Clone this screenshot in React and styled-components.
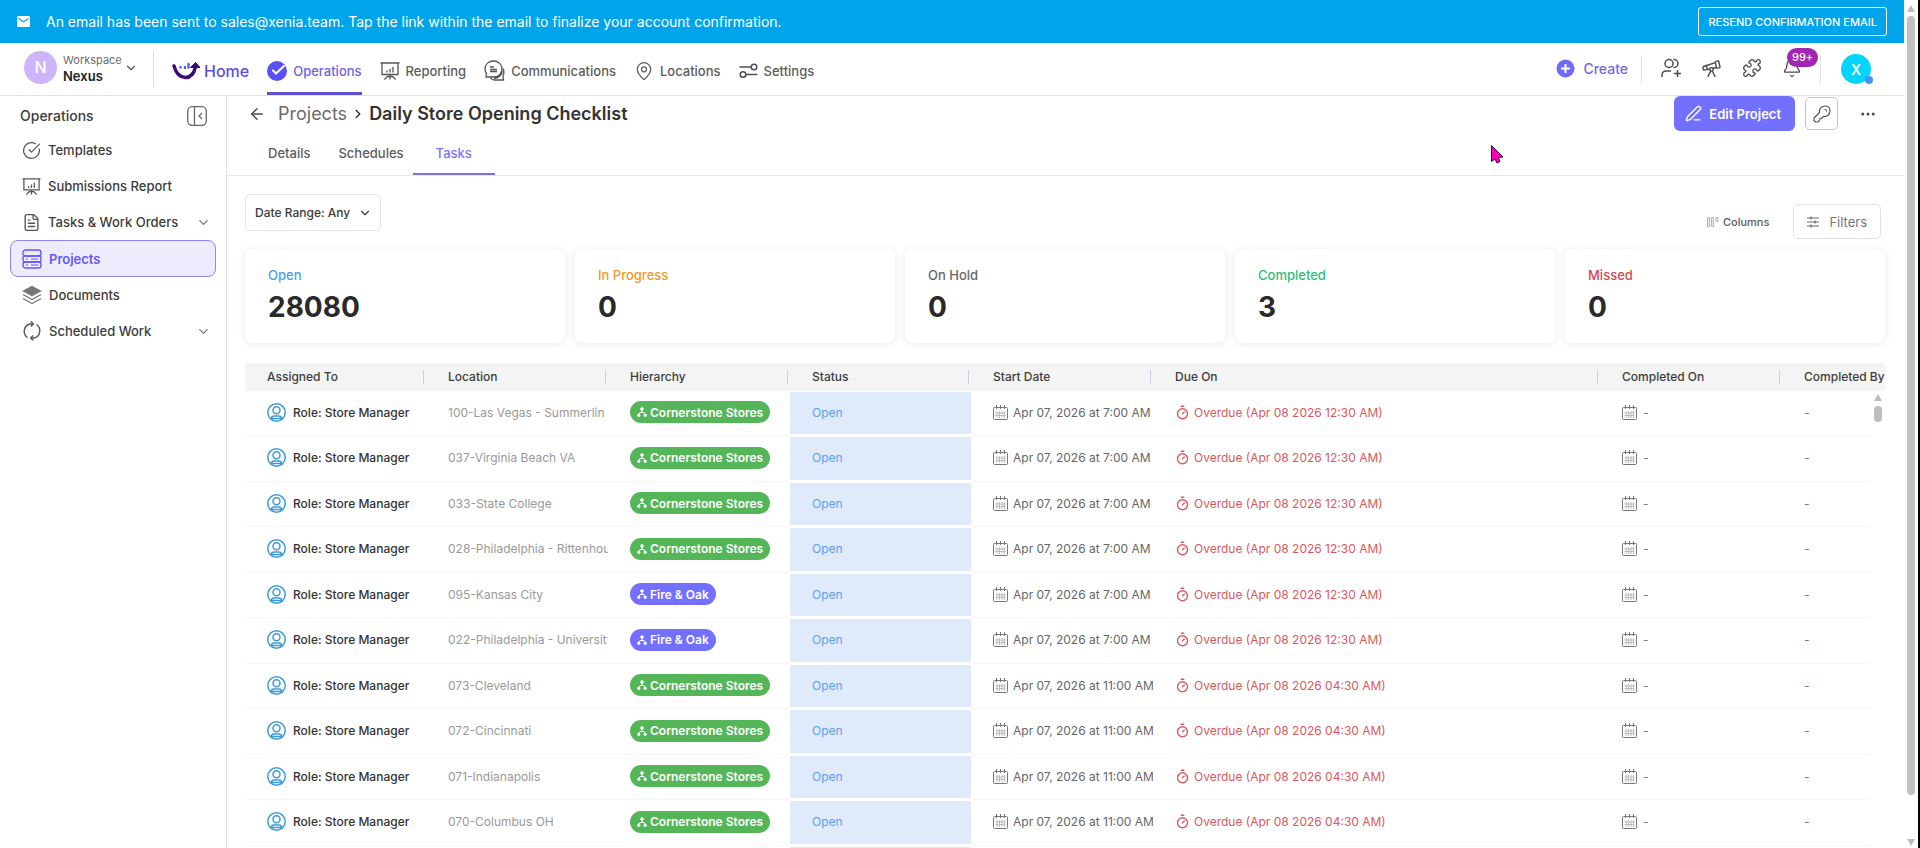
import styled, { createGlobalStyle } from "styled-components";
import {
  ArrowLeft,
  Bell,
  ChevronDown,
  ChevronRight,
  CircleCheckBig,
  Ellipsis,
  FileText,
  MapPin,
  PenLine,
  Puzzle,
  Telescope,
  Timer,
} from "lucide-react";

const GlobalStyle = createGlobalStyle`
  * {
    box-sizing: border-box;
  }
  body {
    margin: 0;
    overflow: hidden;
    background: #fff;
    color: #3c3c3c;
    font-family: Inter, "Open Sans", sans-serif;
    font-size: 13px;
  }
  button, select {
    font-family: inherit;
    color: inherit;
    cursor: pointer;
  }
  a {
    color: inherit;
    text-decoration: none;
  }
  svg {
    flex: none;
    display: block;
  }
`;

/* ---------- shell ---------- */

const Shell = styled.div`
  display: flex;
  height: 100vh;
  border-right: 2px solid #000;
`;
const Page = styled.div`
  flex: 1;
  min-width: 0;
  display: flex;
  flex-direction: column;
`;
const PageScrollbar = styled.div`
  width: 14px;
  display: flex;
  flex-direction: column;
  align-items: center;
  gap: 4px;
  padding: 5px 0 2px;
`;
const PageThumb = styled.div`
  flex: 1;
  width: 8px;
  margin-bottom: 40px;
  border-radius: 4px;
  background: #c1c1c1;
`;
const Body = styled.div`
  flex: 1;
  min-height: 0;
  display: flex;
`;

/* ---------- banner ---------- */

const Banner = styled.div`
  display: flex;
  align-items: center;
  gap: 16px;
  height: 43px;
  padding: 0 17px;
  background: #00a4ea;
  color: #fff;
`;
const BannerText = styled.p`
  flex: 1;
  margin: 0;
  font-size: 14px;
`;
const ResendButton = styled.button`
  height: 29px;
  padding: 0 9px;
  border: 1px solid #fff;
  border-radius: 3px;
  background: none;
  color: #fff;
  font-size: 11px;
  font-weight: 500;
`;

/* ---------- top bar ---------- */

const TopBar = styled.header`
  display: flex;
  align-items: center;
  height: 53px;
  padding: 0 33px 0 24px;
  border-bottom: 1px solid #e2e2e2;
`;
const WorkspaceButton = styled.button`
  display: flex;
  align-items: center;
  gap: 6px;
  width: 130px;
  height: 36px;
  padding: 0 18px 3px 0;
  border: none;
  border-right: 1px solid #e0e0e0;
  background: none;
  text-align: left;
`;
const WorkspaceAvatar = styled.span`
  flex: none;
  width: 33px;
  height: 33px;
  border-radius: 50%;
  background: #cdb4fb;
  color: #fff;
  font-size: 16px;
  font-weight: 500;
  line-height: 33px;
  text-align: center;
`;
const WorkspaceText = styled.span`
  flex: 1;
  display: flex;
  flex-direction: column;
  font-size: 11px;
  line-height: 16px;
  color: #6b6b6b;

  strong {
    color: #222;
    font-size: 13px;
    font-weight: 600;
  }
`;
const WorkspaceArrow = styled(ChevronDown)`
  margin-left: -4px;
`;
const Nav = styled.nav`
  flex: 1;
  align-self: stretch;
  display: flex;
  gap: 18px;
  padding-left: 18px;
`;
const NavLink = styled.a`
  display: flex;
  align-items: center;
  gap: 6px;
  padding-top: 6px;
  border-bottom: 3px solid ${(p) => (p.$active ? "#5e50c8" : "transparent")};
  color: ${(p) => (p.$active ? "#6f63e0" : "#5c5c5c")};
  font-weight: 500;
`;
const HomeLink = styled(NavLink)`
  gap: 4px;
  color: #5b4ddb;
  font-size: 16px;
`;
const CreateButton = styled.button`
  display: flex;
  align-items: center;
  gap: 8px;
  height: 28px;
  padding: 0 13px 2px 0;
  border: none;
  border-right: 1px solid #e0e0e0;
  background: none;
  color: #7468e8;
  font-size: 14px;
  font-weight: 500;
`;
const Tools = styled.div`
  display: flex;
  align-items: center;
  gap: 20px;
  height: 28px;
  padding: 0 18px 2px 19px;
  border-right: 1px solid #e0e0e0;
`;
const IconButton = styled.button`
  position: relative;
  display: flex;
  padding: 0;
  border: none;
  background: none;
  color: #4c4c4c;
`;
const Badge = styled.span`
  position: absolute;
  left: 5px;
  top: -10px;
  height: 19px;
  padding: 0 5px;
  border-radius: 10px;
  background: #a126b4;
  color: #fff;
  font-size: 11px;
  font-weight: 500;
  line-height: 19px;
`;
const UserAvatar = styled.button`
  position: relative;
  width: 30px;
  height: 30px;
  margin-left: 20px;
  padding: 0;
  border: none;
  border-radius: 50%;
  background: #00d5ff;
  color: #fff;
  font-size: 14px;
  font-weight: 600;
`;
const OnlineDot = styled.span`
  position: absolute;
  right: -2px;
  bottom: 0;
  width: 8px;
  height: 8px;
  border-radius: 50%;
  background: #4a90f0;
`;

/* ---------- sidebar ---------- */

const Sidebar = styled.aside`
  width: 227px;
  padding: 8px 10px;
  border-right: 1px solid #e2e2e2;
`;
const SidebarHead = styled.div`
  display: flex;
  align-items: center;
  justify-content: space-between;
  height: 28px;
  padding: 0 9px 4px 10px;
`;
const SidebarTitle = styled.h2`
  margin: 0;
  font-size: 14px;
  font-weight: 500;
  line-height: 28px;
`;
const SideLink = styled.a`
  display: flex;
  align-items: center;
  gap: 7px;
  height: ${(p) => (p.$active ? 37 : 36)}px;
  padding: 0 4px 0 11px;
  border: 1px solid ${(p) => (p.$active ? "#8d85f0" : "transparent")};
  border-radius: 8px;
  background: ${(p) => (p.$active ? "#eeebff" : "none")};
  color: ${(p) => (p.$active ? "#6558f5" : "#3c3c3c")};
  font-weight: ${(p) => (p.$active ? 600 : 500)};

  span {
    flex: 1;
  }
`;

/* ---------- project header ---------- */

const Main = styled.main`
  flex: 1;
  min-width: 0;
  display: flex;
  flex-direction: column;
`;
const TitleRow = styled.div`
  display: flex;
  align-items: center;
  height: 35px;
  padding: 0 27px 0 21px;
`;
const Crumbs = styled.div`
  flex: 1;
  display: flex;
  align-items: center;
  gap: 4px;
  color: #333;
  font-size: 18px;

  button {
    margin-right: 8px;
  }
  a {
    color: #6b6b6b;
  }
`;
const Title = styled.h1`
  margin: 0;
  font-size: 18px;
  font-weight: 600;
`;
const EditButton = styled.button`
  display: flex;
  align-items: center;
  gap: 7px;
  height: 35px;
  margin-right: 10px;
  padding: 0 14px 0 11px;
  border: none;
  border-radius: 6px;
  background: #7470ff;
  color: #fff;
  font-size: 13px;
  font-weight: 600;
`;
const KeyButton = styled.button`
  display: grid;
  place-items: center;
  width: 33px;
  height: 33px;
  margin-right: 21px;
  padding: 0;
  border: 1px solid #c4c4c4;
  border-radius: 5px;
  background: none;
`;
const Tabs = styled.div`
  display: flex;
  height: 45px;
  padding-left: 27px;
  border-bottom: 1px solid #e8e8e8;
`;
const Tab = styled.a`
  padding: 14px ${(p) => (p.$active ? 23 : 14)}px 0;
  margin-left: ${(p) => (p.$active ? -5 : 0)}px;
  border-bottom: 2px solid ${(p) => (p.$active ? "#7a72e0" : "transparent")};
  color: ${(p) => (p.$active ? "#7a74f5" : "#5c5c5c")};
  font-weight: 500;
`;

/* ---------- filters and totals ---------- */

const Content = styled.div`
  flex: 1;
  min-height: 0;
  display: flex;
  flex-direction: column;
  padding: 18px 19px 0 18px;
`;
const FilterRow = styled.div`
  display: flex;
  align-items: flex-start;
  justify-content: space-between;
`;
const RangeBox = styled.label`
  display: grid;
  align-items: center;
  width: 136px;
  height: 37px;
  border: 1px solid #e4e4e4;
  border-radius: 5px;

  select, svg {
    grid-area: 1 / 1;
  }
  select {
    height: 100%;
    padding: 0 9px;
    border: none;
    background: none;
    appearance: none;
    font-size: 12px;
    font-weight: 500;
  }
  svg {
    justify-self: end;
    margin-right: 8px;
    pointer-events: none;
  }
`;
const FilterActions = styled.div`
  display: flex;
  align-items: center;
  gap: 24px;
  padding: 10px 4px 0 0;
`;
const ColumnsButton = styled.button`
  display: flex;
  align-items: center;
  gap: 4px;
  padding: 0;
  border: none;
  background: none;
  color: #5a5a5a;
  font-size: 11px;
  font-weight: 500;
`;
const FiltersButton = styled.button`
  display: flex;
  align-items: center;
  gap: 10px;
  height: 35px;
  padding: 0 13px;
  border: 1px solid #e2e2e2;
  border-radius: 5px;
  background: none;
  color: #757575;
  font-size: 13px;
`;
const Cards = styled.section`
  display: grid;
  grid-template-columns: repeat(5, 1fr);
  gap: 10px;
  margin: 10px 0 20px;
`;
const Card = styled.div`
  height: 94px;
  padding: 17px 23px 0;
  border-radius: 8px;
  background: #fff;
  box-shadow: 0 1px 8px rgba(0, 0, 0, 0.09);
`;
const CardLabel = styled.div`
  color: ${(p) => p.$color};
  font-weight: 500;
  line-height: 18px;
`;
const CardValue = styled.div`
  margin-top: 5px;
  color: #2a2a2a;
  font-size: 28px;
  font-weight: 700;
  line-height: 36px;
`;

/* ---------- table ---------- */

const TableBox = styled.div`
  position: relative;
  flex: 1;
  min-height: 0;
  overflow: hidden;
`;
const Table = styled.table`
  width: 100%;
  table-layout: fixed;
  border-collapse: separate;
  border-spacing: 0;
`;
const Col = styled.col`
  width: ${(p) => (p.$width ? p.$width + "px" : "auto")};
`;
const Th = styled.th`
  height: 28px;
  padding: 0 2px 0 22px;
  background: #f4f4f4;
  color: #3c3c3c;
  font-size: 12px;
  font-weight: 500;
  text-align: left;
  white-space: nowrap;

  div {
    line-height: 14px;
  }
  div:not(.last) {
    border-right: 1px solid #cfcfe0;
  }
`;
const Row = styled.tr`
  height: 45px;

  &:nth-child(even) {
    height: 46px;
  }
`;
const Td = styled.td`
  padding: 0 0 2px 22px;
  border-bottom: 1px solid #f6f6f6;
  color: ${(p) => p.$color || "#3c3c3c"};
  font-size: 12px;
  font-weight: ${(p) => p.$weight || 400};
  white-space: nowrap;
  overflow: hidden;
`;
const StatusTd = styled(Td)`
  border-top: 1px solid #fff;
  border-bottom: 2px solid #fff;
  background: #dfeafb;
  background-clip: padding-box;
`;
const WithIcon = styled.div`
  display: flex;
  align-items: center;
  gap: ${(p) => p.$gap}px;
`;
const Pill = styled.span`
  display: inline-flex;
  align-items: center;
  gap: 3px;
  height: 22px;
  padding: 0 7px;
  border-radius: 11px;
  background: ${(p) => p.$color};
  color: #fff;
  font-size: 12px;
  font-weight: 600;
`;
const TableScrollbar = styled.div`
  position: absolute;
  top: 28px;
  right: 0;
  bottom: 0;
  width: 14px;
  display: flex;
  flex-direction: column;
  align-items: center;
  gap: 5px;
  padding-top: 3px;
  background: #fff;
`;
const TableThumb = styled.div`
  width: 8px;
  height: 16px;
  border-radius: 4px;
  background: #bdbdbd;
`;
const Pointer = styled.svg`
  position: fixed;
  left: 1490px;
  top: 144px;
`;

/* ---------- drawings ---------- */

const ScrollArrow = ({ down }) => (
  <svg width="8" height="7" viewBox="0 0 8 7" fill="#bdbdbd">
    <path d={down ? "M0 0h8L4 7z" : "M0 7h8L4 0z"} />
  </svg>
);

const MailIcon = () => (
  <svg width="13" height="11" viewBox="0 0 13 11">
    <rect width="13" height="11" rx="1.5" fill="#fff" />
    <path d="M1.5 2.5l5 3.3 5-3.3" fill="none" stroke="#00a4ea" strokeWidth="1.2" />
  </svg>
);

const LogoIcon = () => (
  <svg width="28" height="18" viewBox="0 0 28 18" fill="none">
    <path
      d="M2 4c2 7 6 11.500 11.500 11.500S22 11.500 23.500 5"
      stroke="#3a0a78"
      strokeWidth="3.400"
      strokeLinecap="round"
    />
    <path d="M18.500 5.500L23.500.5l4.500 5z" fill="#3a0a78" stroke="#3a0a78" strokeLinejoin="round" />
    <path d="M8.500 5v.5M13 5v1M16.500 2v3.500" stroke="#5b5bff" strokeWidth="2.400" strokeLinecap="round" />
  </svg>
);

const CheckDisc = () => (
  <svg width="20" height="20" viewBox="0 0 20 20">
    <circle cx="10" cy="10" r="10" fill="#5a4ff3" />
    <path
      d="M6 9.500l3 3L17 5"
      fill="none"
      stroke="#fff"
      strokeWidth="2"
      strokeLinecap="round"
      strokeLinejoin="round"
    />
  </svg>
);

const BoardIcon = ({ size = 20 }) => (
  <svg width={size} height={size} viewBox="0 0 20 20" fill="none" stroke="#555" strokeWidth="1.300">
    <path d="M.5 2h19M2 2v11.500h16V2M10 13.500v3M4.500 18.500l3-3h5l3 3M10 15.500v3" />
    <path d="M7 9.500v2M10 8v3.500M13 6v5.500" />
  </svg>
);

const ChatIcon = () => (
  <svg width="21" height="21" viewBox="0 0 21 21" fill="none" stroke="#555" strokeWidth="1.300">
    <path d="M9.500 1C14 1 18 4 18 9s-4 8-8.500 8H2l.5-3.500C1.300 12 1 10.500 1 9c0-5 4-8 8.500-8z" />
    <path d="M19 8.500c1.500 3 1 5.500 0 7.500l.5 4h-9c-2 0-3.500-1-4.500-2.500" />
    <path d="M18 11c0 4-4 7-8 7" strokeWidth="2" />
    <path d="M6 7h4M6 9.500h7M6 11.500h7" strokeWidth="1.600" />
  </svg>
);

const TogglesIcon = () => (
  <svg width="19" height="15" viewBox="0 0 19 15" fill="none" stroke="#4f4f4f" strokeWidth="1.500">
    <path d="M.5 4H12M7 11.500h11.500" />
    <circle cx="15" cy="4" r="2.800" />
    <circle cx="4" cy="11.500" r="2.800" />
  </svg>
);

const PlusDisc = () => (
  <svg width="19" height="19" viewBox="0 0 19 19">
    <circle cx="9.500" cy="9.500" r="9" fill="#7169fa" />
    <path d="M9.500 5v9M5 9.500h9" stroke="#fff" strokeWidth="2" />
  </svg>
);

const AddUserIcon = () => (
  <svg
    width="20"
    height="20"
    viewBox="0 0 20 20"
    fill="none"
    stroke="currentColor"
    strokeWidth="1.500"
    strokeLinecap="round"
  >
    <circle cx="8" cy="5.500" r="4" />
    <path d="M13 1.500a4 4 0 0 1 0 8M1 18.500v-1.500c0-2.500 2-4 4.500-4h4M16.500 12.500v6M13.500 15.500h6" />
  </svg>
);

const KeyIcon = () => (
  <svg width="18" height="18" viewBox="0 0 18 18" fill="none" stroke="#555" strokeWidth="1.200">
    <path
      d="M6.500 7.500C6 4 8.500 1 12 1c3 0 5 2 5 5 0 3.500-3 6-6.500 5.500L8.500 13.200l-1.500.3-.3 1.700L5 17H2.500L1 15.500V13z"
      strokeLinejoin="round"
    />
    <path d="M11.500 4.500c1.200 0 2 .8 2 2" />
  </svg>
);

const CollapseIcon = () => (
  <svg width="20" height="20" viewBox="0 0 20 20" fill="none" stroke="#666" strokeWidth="1.300">
    <rect x=".7" y=".7" width="18.600" height="18.600" rx="4.500" />
    <path d="M7.500 1v18M15 7l-3 3 3 3" />
  </svg>
);

const ServerIcon = () => (
  <svg width="20" height="20" viewBox="0 0 20 20" fill="none" stroke="#6558f5" strokeWidth="1.400">
    <rect x="1" y="1" width="18" height="6" rx="2.500" />
    <rect x="1" y="7" width="18" height="6" rx="2" />
    <rect x="1" y="13" width="18" height="6" rx="2.500" />
    <path d="M4 10h2M9 10h7M4 16h2M9 16h7" strokeWidth="1.200" />
  </svg>
);

const LayersIcon = () => (
  <svg width="20" height="20" viewBox="0 0 20 20" fill="none" stroke="#777" strokeWidth="1.300">
    <path d="M10 1.500l8.500 4.500-8.500 4.500L1.500 6z" fill="#777" />
    <path d="M1 9.500l9 5 9-5M1 13.500l9 5 9-5" />
  </svg>
);

const CycleIcon = () => (
  <svg width="20" height="20" viewBox="0 0 20 20" fill="none" stroke="#555" strokeWidth="1.400">
    <path d="M5.500 16.500A7.500 7.500 0 0 1 8 3h3M14.500 3.500A7.500 7.500 0 0 1 12 17H9" />
    <path d="M8.800.5L11.300 3 8.800 5.500M11.200 14.500L8.700 17l2.500 2.500" />
  </svg>
);

const ColumnsIcon = () => (
  <svg width="12" height="10" viewBox="0 0 12 10" fill="#eee" stroke="#b5b5b5">
    <path d="M.5.5h2v9h-2zM4.500.5h2v9h-2zM9 .5h2v4H9z" />
  </svg>
);

const SlidersIcon = () => (
  <svg width="12" height="12" viewBox="0 0 12 12" fill="none" stroke="#666" strokeWidth="1.200">
    <path d="M0 2h12M0 6h12M0 10h12M4 .5v3M8 4.500v3M4 8.500v3" />
  </svg>
);

const RoleIcon = () => (
  <svg width="19" height="19" viewBox="0 0 19 19" fill="none" stroke="#3f9bd8" strokeWidth="1.500">
    <circle cx="9.500" cy="9.500" r="8.700" />
    <circle cx="9.500" cy="7.300" r="3.500" />
    <path d="M4 16.500c0-2 1.500-3.500 3.500-3.500h4c2 0 3.500 1.500 3.500 3.500M4.500 15.500h10" />
  </svg>
);

const TreeIcon = () => (
  <svg width="10" height="10" viewBox="0 0 10 10" fill="#fff" stroke="#fff">
    <circle cx="5" cy="2" r="1.300" />
    <circle cx="1.800" cy="8.300" r="1.200" />
    <circle cx="8.200" cy="8.300" r="1.200" />
    <path d="M5 2v3M1.800 8.300L3 5.500h4l1.200 2.800" fill="none" />
  </svg>
);

const CalendarIcon = () => (
  <svg width="15" height="15" viewBox="0 0 15 15" fill="none" stroke="#777">
    <rect x=".5" y="2.500" width="14" height="12" rx="1" />
    <path d="M3.500 0v4M7.500 0v4M11.500 0v4" />
    <path d="M4 6v7M6.500 6v7M9 6v7M11.500 6v7M2.500 8h10M2.500 10.500h10" stroke="#bbb" />
  </svg>
);

const OverdueIcon = () => <Timer size={15} strokeWidth={2.2} />;

/* ---------- data ---------- */

const sideItems = [
  { label: "Templates", icon: <CircleCheckBig size={19} strokeWidth={1.5} color="#555" /> },
  { label: "Submissions Report", icon: <BoardIcon size={19} /> },
  { label: "Tasks & Work Orders", icon: <FileText size={19} strokeWidth={1.7} color="#555" />, more: true },
  { label: "Projects", icon: <ServerIcon />, active: true },
  { label: "Documents", icon: <LayersIcon /> },
  { label: "Scheduled Work", icon: <CycleIcon />, more: true },
];

const totals = [
  ["Open", "28080", "#4a9df0"],
  ["In Progress", "0", "#f09a2a"],
  ["On Hold", "0", "#666"],
  ["Completed", "3", "#2dbd7c"],
  ["Missed", "0", "#d64550"],
];

const columns = [
  ["Assigned To", 181],
  ["Location", 182],
  ["Hierarchy", 182],
  ["Status", 181],
  ["Start Date", 182],
  ["Due On", 0],
  ["Completed On", 182],
  ["Completed By", 103],
];

const tasks = [
  ["100-Las Vegas - Summerlin", "Cornerstone Stores", "7:00", "12:30"],
  ["037-Virginia Beach VA", "Cornerstone Stores", "7:00", "12:30"],
  ["033-State College", "Cornerstone Stores", "7:00", "12:30"],
  ["028-Philadelphia - Rittenhouse", "Cornerstone Stores", "7:00", "12:30"],
  ["095-Kansas City", "Fire & Oak", "7:00", "12:30"],
  ["022-Philadelphia - University", "Fire & Oak", "7:00", "12:30"],
  ["073-Cleveland", "Cornerstone Stores", "11:00", "04:30"],
  ["072-Cincinnati", "Cornerstone Stores", "11:00", "04:30"],
  ["071-Indianapolis", "Cornerstone Stores", "11:00", "04:30"],
  ["070-Columbus OH", "Cornerstone Stores", "11:00", "04:30"],
  ["069-Dayton", "Cornerstone Stores", "11:00", "04:30"],
];

export default function App() {
  return (
    <>
      <GlobalStyle />
      <Shell>
        <Page>
          <Banner>
            <MailIcon />
            <BannerText>
              An email has been sent to sales@xenia.team. Tap the link within the email to finalize your
              account confirmation.
            </BannerText>
            <ResendButton>RESEND CONFIRMATION EMAIL</ResendButton>
          </Banner>

          <TopBar>
            <WorkspaceButton>
              <WorkspaceAvatar>N</WorkspaceAvatar>
              <WorkspaceText>
                Workspace
                <strong>Nexus</strong>
              </WorkspaceText>
              <WorkspaceArrow size={14} color="#555" />
            </WorkspaceButton>
            <Nav>
              <HomeLink href="#home">
                <LogoIcon />
                Home
              </HomeLink>
              <NavLink href="#operations" $active>
                <CheckDisc />
                Operations
              </NavLink>
              <NavLink href="#reporting">
                <BoardIcon />
                Reporting
              </NavLink>
              <NavLink href="#communications">
                <ChatIcon />
                Communications
              </NavLink>
              <NavLink href="#locations">
                <MapPin size={20} strokeWidth={1.5} />
                Locations
              </NavLink>
              <NavLink href="#settings">
                <TogglesIcon />
                Settings
              </NavLink>
            </Nav>
            <CreateButton>
              <PlusDisc />
              Create
            </CreateButton>
            <Tools>
              <IconButton aria-label="Invite">
                <AddUserIcon />
              </IconButton>
              <IconButton aria-label="Explore">
                <Telescope size={21} strokeWidth={1.6} />
              </IconButton>
              <IconButton aria-label="Integrations">
                <Puzzle size={20} strokeWidth={1.6} />
              </IconButton>
              <IconButton aria-label="Notifications">
                <Bell size={20} strokeWidth={1.6} />
                <Badge>99+</Badge>
              </IconButton>
            </Tools>
            <UserAvatar>
              X
              <OnlineDot />
            </UserAvatar>
          </TopBar>

          <Body>
            <Sidebar>
              <SidebarHead>
                <SidebarTitle>Operations</SidebarTitle>
                <IconButton aria-label="Collapse sidebar">
                  <CollapseIcon />
                </IconButton>
              </SidebarHead>
              {sideItems.map((item) => (
                <SideLink key={item.label} href="#" $active={item.active}>
                  {item.icon}
                  <span>{item.label}</span>
                  {item.more && <ChevronDown size={15} color="#777" />}
                </SideLink>
              ))}
            </Sidebar>

            <Main>
              <TitleRow>
                <Crumbs>
                  <IconButton aria-label="Back">
                    <ArrowLeft size={18} />
                  </IconButton>
                  <a href="#projects">Projects</a>
                  <ChevronRight size={14} strokeWidth={2.5} />
                  <Title>Daily Store Opening Checklist</Title>
                </Crumbs>
                <EditButton>
                  <PenLine size={17} />
                  Edit Project
                </EditButton>
                <KeyButton aria-label="Permissions">
                  <KeyIcon />
                </KeyButton>
                <IconButton aria-label="More">
                  <Ellipsis size={18} />
                </IconButton>
              </TitleRow>
              <Tabs>
                <Tab href="#details">Details</Tab>
                <Tab href="#schedules">Schedules</Tab>
                <Tab href="#tasks" $active>
                  Tasks
                </Tab>
              </Tabs>

              <Content>
                <FilterRow>
                  <RangeBox>
                    <select aria-label="Date range">
                      <option>Date Range: Any</option>
                    </select>
                    <ChevronDown size={14} />
                  </RangeBox>
                  <FilterActions>
                    <ColumnsButton>
                      <ColumnsIcon />
                      Columns
                    </ColumnsButton>
                    <FiltersButton>
                      <SlidersIcon />
                      Filters
                    </FiltersButton>
                  </FilterActions>
                </FilterRow>

                <Cards>
                  {totals.map(([label, value, color]) => (
                    <Card key={label}>
                      <CardLabel $color={color}>{label}</CardLabel>
                      <CardValue>{value}</CardValue>
                    </Card>
                  ))}
                </Cards>

                <TableBox>
                  <Table>
                    <colgroup>
                      {columns.map(([label, width]) => (
                        <Col key={label} $width={width} />
                      ))}
                    </colgroup>
                    <thead>
                      <tr>
                        {columns.map(([label], i) => (
                          <Th key={label}>
                            <div className={i === columns.length - 1 ? "last" : ""}>{label}</div>
                          </Th>
                        ))}
                      </tr>
                    </thead>
                    <tbody>
                      {tasks.map(([location, brand, start, due]) => (
                        <Row key={location}>
                          <Td $weight={500} $color="#333">
                            <WithIcon $gap={7}>
                              <RoleIcon />
                              Role: Store Manager
                            </WithIcon>
                          </Td>
                          <Td $color="#999">{location}</Td>
                          <Td>
                            <Pill $color={brand === "Fire & Oak" ? "#7470ff" : "#55b559"}>
                              <TreeIcon />
                              {brand}
                            </Pill>
                          </Td>
                          <StatusTd $color="#5aa0f0">Open</StatusTd>
                          <Td $color="#666">
                            <WithIcon $gap={5}>
                              <CalendarIcon />
                              Apr 07, 2026 at {start} AM
                            </WithIcon>
                          </Td>
                          <Td $color="#d9595c">
                            <WithIcon $gap={4}>
                              <OverdueIcon />
                              Overdue (Apr 08 2026 {due} AM)
                            </WithIcon>
                          </Td>
                          <Td $color="#777">
                            <WithIcon $gap={6}>
                              <CalendarIcon />-
                            </WithIcon>
                          </Td>
                          <Td $color="#777">-</Td>
                        </Row>
                      ))}
                    </tbody>
                  </Table>
                  <TableScrollbar>
                    <ScrollArrow />
                    <TableThumb />
                  </TableScrollbar>
                </TableBox>
              </Content>
            </Main>
          </Body>
        </Page>
        <PageScrollbar>
          <ScrollArrow />
          <PageThumb />
          <ScrollArrow down />
        </PageScrollbar>
      </Shell>
      <Pointer width="14" height="20" viewBox="0 0 14 20">
        <path
          d="M1.500 1.500v16l3.500-2.500 2 4 3-1.500-1.500-4 4.500-.5z"
          fill="#f500b4"
          stroke="#3d0a3a"
          strokeLinejoin="round"
        />
      </Pointer>
    </>
  );
}
